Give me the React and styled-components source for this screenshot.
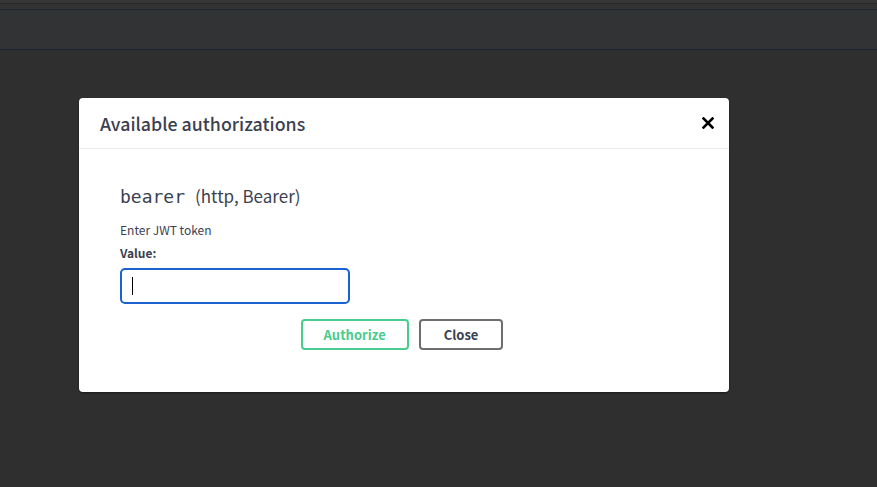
import React from 'react';
import styled, { createGlobalStyle } from 'styled-components';

const GlobalStyle = createGlobalStyle`
  html, body {
    margin: 0;
    padding: 0;
    background: #2f2f2f;
    font-family: "Noto Sans CJK KR", "Open Sans", sans-serif;
  }
`;

const Page = styled.div`
  width: 877px;
  height: 487px;
  background: #2f2f2f;
  overflow: hidden;
`;

const Strip = styled.div`
  height: ${(props) => props.h}px;
  background: ${(props) => props.bg};
  border-bottom: 1px solid ${(props) => props.line};
`;

const Stage = styled.div`
  padding: 48px 0 0 79px;
`;

const Modal = styled.div`
  width: 650px;
  background: #fff;
  border-radius: 4px;
  box-shadow: 0 1px 2px rgba(0, 0, 0, 0.45);
`;

const Header = styled.div`
  height: 50px;
  display: flex;
  align-items: center;
  justify-content: space-between;
  padding: 0 12px 0 21px;
  border-bottom: 1px solid #ebebeb;
`;

const Title = styled.h3`
  margin: 0;
  font-size: 17.8px;
  font-weight: 500;
  color: #3b4151;
`;

const CloseX = styled.button`
  border: none;
  background: none;
  padding: 0;
  width: 18px;
  height: 18px;
  display: flex;
  align-items: center;
  justify-content: center;
  cursor: pointer;
`;

const Body = styled.div`
  padding: 34px 20px 42px 41px;
`;

const SchemeTitle = styled.h4`
  margin: 0 0 13px;
  display: flex;
  align-items: baseline;
  gap: 10px;
  color: #3b4151;
`;

const Mono = styled.code`
  font-family: "DejaVu Sans Mono", "Liberation Mono", monospace;
  font-size: 18px;
  font-weight: 400;
`;

const Kind = styled.span`
  font-size: 17px;
  font-weight: 400;
`;

const Hint = styled.p`
  margin: 0 0 6px;
  font-size: 12px;
  color: #3b4151;
`;

const Label = styled.label`
  display: block;
  font-size: 12px;
  font-weight: 700;
  color: #3b4151;
  margin-bottom: 7px;
`;

const Input = styled.div`
  width: 230px;
  height: 36px;
  box-sizing: border-box;
  border: 2px solid #1b62d1;
  border-radius: 5px;
  display: flex;
  align-items: center;
  padding-left: 10px;
`;

const Caret = styled.span`
  width: 1px;
  height: 18px;
  background: #000;
`;

const Actions = styled.div`
  display: flex;
  justify-content: center;
  gap: 10px;
  margin-top: 15px;
  padding-right: 25px;
`;

const Button = styled.button`
  height: 31px;
  box-sizing: border-box;
  padding: 0 ${(props) => (props.$primary ? 21 : 23)}px;
  background: #fff;
  border: 2px solid ${(props) => (props.$primary ? '#49cc90' : '#6e6e6e')};
  border-radius: 4px;
  color: ${(props) => (props.$primary ? '#49cc90' : '#3b4151')};
  font-family: "Noto Sans CJK KR", "Open Sans", sans-serif;
  font-size: 13px;
  font-weight: 700;
  cursor: pointer;
`;

export default function App() {
  return (
    <Page>
      <GlobalStyle />
      <Strip h={3} bg="#363636" line="#2a2a2a" />
      <Strip h={5} bg="#333333" line="#1f2633" />
      <Strip h={39} bg="#323334" line="#1d2330" />
      <Stage>
        <Modal>
          <Header>
            <Title>Available authorizations</Title>
            <CloseX aria-label="close">
              <svg width="12" height="12" viewBox="0 0 12 12">
                <path d="M1.5 1.5 L10.5 10.5 M10.5 1.5 L1.5 10.5" stroke="#000" strokeWidth="2.6" strokeLinecap="square" />
              </svg>
            </CloseX>
          </Header>
          <Body>
            <SchemeTitle>
              <Mono>bearer</Mono>
              <Kind>(http, Bearer)</Kind>
            </SchemeTitle>
            <Hint>Enter JWT token</Hint>
            <Label>Value:</Label>
            <Input>
              <Caret />
            </Input>
            <Actions>
              <Button $primary>Authorize</Button>
              <Button>Close</Button>
            </Actions>
          </Body>
        </Modal>
      </Stage>
    </Page>
  );
}
